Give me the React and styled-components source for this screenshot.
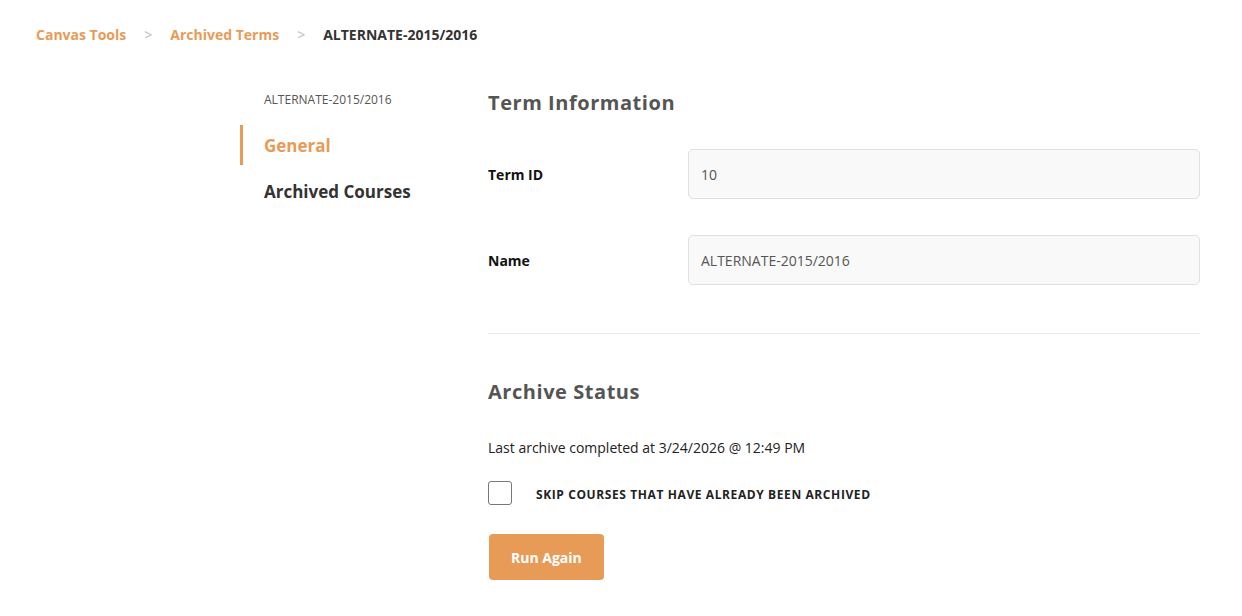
import React from "react";
import styled, { createGlobalStyle } from "styled-components";

const ORANGE = "#e89b57";

const Global = createGlobalStyle`
  html, body { margin: 0; padding: 0; background: #fff; }
  body { font-family: "Open Sans", "Liberation Sans", sans-serif; color: #222; }
  * { box-sizing: border-box; }
`;

const Page = styled.div`
  width: 1242px;
  min-height: 616px;
  padding-top: 1px;
`;

const Breadcrumbs = styled.nav`
  display: flex;
  align-items: center;
  padding: 24px 36px 0;
  height: 44px;
  font-size: 14px;
  line-height: 20px;
  font-weight: 700;
`;

const Crumb = styled.a`
  color: ${(p) => (p.$current ? "#333" : ORANGE)};
  text-decoration: none;
`;

const Sep = styled.span`
  color: #bbb;
  font-weight: 400;
  margin: 0 18px;
`;

const Layout = styled.div`
  display: flex;
  padding: 44px 0 0 240px;
`;

const Sidebar = styled.aside`
  width: 248px;
  flex: none;
`;

const SideTitle = styled.div`
  font-size: 12px;
  line-height: 22px;
  color: #555;
  padding-left: 24px;
  margin-bottom: 14px;
`;

const NavItem = styled.a`
  display: flex;
  align-items: center;
  height: 40px;
  margin-bottom: 6px;
  padding-left: 21px;
  border-left: 3px solid ${(p) => (p.$active ? ORANGE : "transparent")};
  font-size: 17px;
  font-weight: 700;
  color: ${(p) => (p.$active ? ORANGE : "#333")};
  text-decoration: none;
`;

const Main = styled.main`
  width: 712px;
  flex: none;
`;

const Heading = styled.h2`
  margin: 0;
  font-size: 20px;
  line-height: 28px;
  font-weight: 700;
  color: #555;
  letter-spacing: 0.55px;
`;

const Fields = styled.div`
  display: flex;
  flex-direction: column;
  gap: 36px;
  margin-top: 32px;
`;

const Row = styled.div`
  display: flex;
  align-items: center;
`;

const Label = styled.label`
  width: 200px;
  flex: none;
  font-size: 14px;
  font-weight: 700;
  color: #111;
`;

const Input = styled.input`
  flex: 1;
  height: 50px;
  padding: 0 12px;
  border: 1px solid #e0e0e0;
  border-radius: 5px;
  background: #f9f9f9;
  font-family: inherit;
  font-size: 14px;
  color: #555;
  outline: none;
`;

const Divider = styled.hr`
  border: none;
  border-top: 1px solid #e8e8e8;
  margin: 48px 0 44px;
`;

const Status = styled.p`
  margin: 32px 0 0;
  font-size: 14px;
  line-height: 20px;
  color: #222;
`;

const CheckRow = styled.label`
  display: flex;
  align-items: center;
  margin-top: 23px;
  gap: 24px;
`;

const Box = styled.span`
  width: 24px;
  height: 24px;
  border: 1px solid #777;
  border-radius: 3px;
  background: #fff;
  flex: none;
`;

const CheckText = styled.span`
  font-size: 12px;
  font-weight: 700;
  letter-spacing: 0.6px;
  text-transform: uppercase;
  color: #222;
  padding-top: 3px;
`;

const Button = styled.button`
  display: block;
  margin-top: 29px;
  margin-left: 1px;
  height: 46px;
  padding: 0 22px;
  border: none;
  border-radius: 4px;
  background: ${ORANGE};
  color: #fff;
  font-family: inherit;
  font-size: 14px;
  font-weight: 700;
  cursor: pointer;
`;

export default function App() {
  return (
    <Page>
      <Global />
      <Breadcrumbs>
        <Crumb href="#">Canvas Tools</Crumb>
        <Sep>&gt;</Sep>
        <Crumb href="#">Archived Terms</Crumb>
        <Sep>&gt;</Sep>
        <Crumb $current>ALTERNATE-2015/2016</Crumb>
      </Breadcrumbs>
      <Layout>
        <Sidebar>
          <SideTitle>ALTERNATE-2015/2016</SideTitle>
          <NavItem href="#" $active>General</NavItem>
          <NavItem href="#">Archived Courses</NavItem>
        </Sidebar>
        <Main>
          <Heading>Term Information</Heading>
          <Fields>
            <Row>
              <Label>Term ID</Label>
              <Input readOnly value="10" />
            </Row>
            <Row>
              <Label>Name</Label>
              <Input readOnly value="ALTERNATE-2015/2016" />
            </Row>
          </Fields>
          <Divider />
          <Heading>Archive Status</Heading>
          <Status>Last archive completed at 3/24/2026 @ 12:49 PM</Status>
          <CheckRow>
            <Box />
            <CheckText>Skip courses that have already been archived</CheckText>
          </CheckRow>
          <Button>Run Again</Button>
        </Main>
      </Layout>
    </Page>
  );
}
